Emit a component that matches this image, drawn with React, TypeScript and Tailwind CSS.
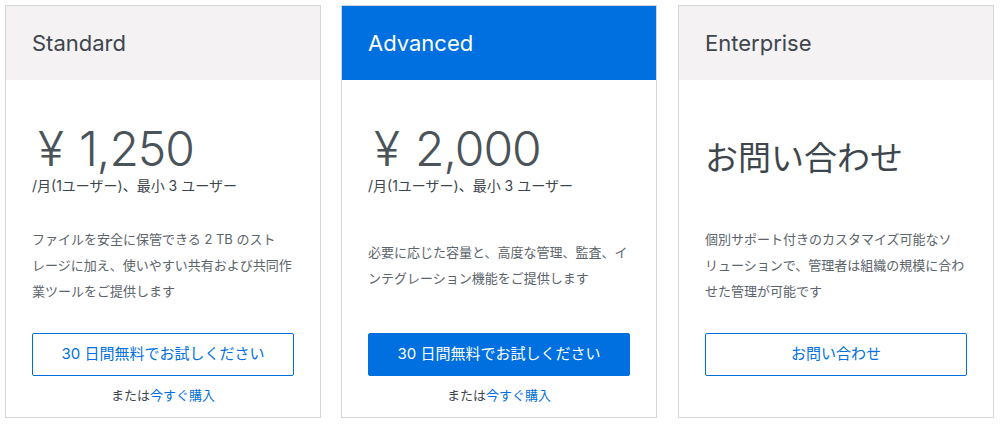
const font = "font-['Inter','Noto_Sans_CJK_JP',sans-serif]";

type Plan = {
  name: string;
  featured?: boolean;
  price?: string;
  contact?: boolean;
  desc: string[];
  cta: string;
  buy?: boolean;
};

const plans: Plan[] = [
  {
    name: "Standard",
    price: "1,250",
    desc: ["ファイルを安全に保管できる 2 TB のスト", "レージに加え、使いやすい共有および共同作", "業ツールをご提供します"],
    cta: "30 日間無料でお試しください",
    buy: true,
  },
  {
    name: "Advanced",
    featured: true,
    price: "2,000",
    desc: ["必要に応じた容量と、高度な管理、監査、イ", "ンテグレーション機能をご提供します"],
    cta: "30 日間無料でお試しください",
    buy: true,
  },
  {
    name: "Enterprise",
    contact: true,
    desc: ["個別サポート付きのカスタマイズ可能なソ", "リューションで、管理者は組織の規模に合わ", "せた管理が可能です"],
    cta: "お問い合わせ",
  },
];

function PlanCard({ plan }: { plan: Plan }) {
  return (
    <div className="w-[316px] h-[413px] border border-[#d3d6da] bg-white flex flex-col">
      <div className={`h-[74px] flex items-center px-[26px] text-[22px] ${plan.featured ? "bg-[#0070e0] text-white" : "bg-[#f4f2f2] text-[#3d454d]"}`}>
        {plan.name}
      </div>
      <div className="px-[26px] flex flex-col">
        <div className="h-[84px] mt-[36px] flex flex-col justify-center">
          {plan.contact ? (
            <div className="text-[33px] leading-[40px] text-[#3d454d]">お問い合わせ</div>
          ) : (
            <>
              <div className="text-[48px] leading-[52px] font-light tracking-[-1px] text-[#4a525a] pl-[6px] mt-[2px]">
                <span className="mr-[16px]">¥</span>{plan.price}
              </div>
              <div className="text-[14px] leading-[20px] mt-[1px] text-[#3d454d]">/月(1ユーザー)、最小 3 ユーザー</div>
            </>
          )}
        </div>
        <div className="h-[130px] flex flex-col justify-center text-[13px] leading-[26px] text-[#5b636b]">
          {plan.desc.map((l) => <div key={l} className="whitespace-nowrap">{l}</div>)}
        </div>
        <button
          className={`mt-[3px] h-[43px] w-full rounded-[2px] border border-[#0070e0] text-[15px] ${plan.featured ? "bg-[#0070e0] text-white" : "bg-white text-[#0070e0]"}`}
        >
          {plan.cta}
        </button>
        {plan.buy && (
          <div className="mt-[9px] text-center text-[13px] leading-[20px] text-[#3d454d]">
            または<span className="text-[#0070e0]">今すぐ購入</span>
          </div>
        )}
      </div>
    </div>
  );
}

export default function App() {
  return (
    <div className={`w-[1002px] h-[424px] bg-white ${font}`}>
      <div className="flex gap-[20px] pl-[5px] pt-[5px]">
        {plans.map((p, i) => (
          <div key={p.name} className={i === 2 ? "ml-[1px]" : ""}>
            <PlanCard plan={p} />
          </div>
        ))}
      </div>
    </div>
  );
}
